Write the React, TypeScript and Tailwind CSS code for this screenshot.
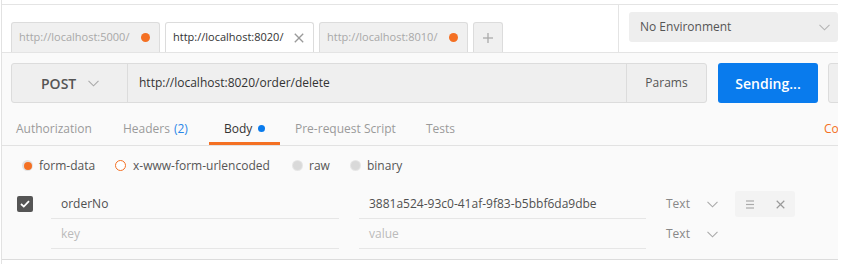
import React from "react";

const Chevron = ({ className = "" }: { className?: string }) => (
  <svg width="11" height="7" viewBox="0 0 11 7" className={className}>
    <polyline points="0.5,0.8 5.5,5.8 10.5,0.8" fill="none" stroke="currentColor" strokeWidth="1.1" />
  </svg>
);

const XIcon = ({ size = 10, className = "" }: { size?: number; className?: string }) => (
  <svg width={size} height={size} viewBox="0 0 10 10" className={className}>
    <line x1="0.8" y1="0.8" x2="9.2" y2="9.2" stroke="currentColor" strokeWidth="1.3" />
    <line x1="9.2" y1="0.8" x2="0.8" y2="9.2" stroke="currentColor" strokeWidth="1.3" />
  </svg>
);

const font = { fontFamily: '"Open Sans", "Liberation Sans", sans-serif' };

function Tab({ label, active, dot }: { label: string; active?: boolean; dot?: boolean }) {
  return (
    <div
      className={
        "h-[30px] w-[149px] shrink-0 rounded-t-[3px] border border-b-0 border-[#dcdcdc] flex items-center justify-between pl-[7px] pr-[9px] text-[11px] " +
        (active ? "bg-white text-[#333]" : "bg-[#f0f0f0] text-[#a8a8a8]")
      }
    >
      <span>{label}</span>
      {dot ? (
        <span className="w-[9px] h-[9px] rounded-full bg-[#f47023]" />
      ) : (
        <XIcon size={10} className="text-[#9a9a9a]" />
      )}
    </div>
  );
}

function Radio({ kind }: { kind: "on" | "hover" | "off" }) {
  if (kind === "on")
    return (
      <span className="w-[11px] h-[11px] rounded-full bg-[#e2e2e2] flex items-center justify-center">
        <span className="w-[8px] h-[8px] rounded-full bg-[#f47023]" />
      </span>
    );
  if (kind === "hover")
    return <span className="w-[11px] h-[11px] rounded-full bg-white border border-[#f47023]" />;
  return (
    <span className="w-[11px] h-[11px] rounded-full bg-[#e6e6e6] flex items-center justify-center">
      <span className="w-[9px] h-[9px] rounded-full bg-[#d9d9d9]" />
    </span>
  );
}

export default function App() {
  return (
    <div className="w-[842px] h-[264px] overflow-hidden bg-white" style={font}>
      <div className="ml-px w-[837px] h-full overflow-hidden border-l border-[#e2e2e2] flex flex-col bg-[#fafafa]">
        {/* header */}
        <div className="bg-white pt-[4px] shrink-0">
          <div className="h-[49px] border-t border-b border-[#e4e4e4] flex">
            <div className="w-[617px] shrink-0 border-r border-[#e4e4e4] flex items-end gap-[5px] pl-[9px]">
              <Tab label="http://localhost:5000/" dot />
              <Tab label="http://localhost:8020/" active />
              <Tab label="http://localhost:8010/" dot />
              <div className="h-[30px] w-[30px] shrink-0 rounded-t-[3px] border border-b-0 border-[#dcdcdc] bg-[#f0f0f0] flex items-center justify-center text-[#aaa]">
                <svg width="10" height="10" viewBox="0 0 10 10">
                  <line x1="5" y1="0" x2="5" y2="10" stroke="currentColor" strokeWidth="1.3" />
                  <line x1="0" y1="5" x2="10" y2="5" stroke="currentColor" strokeWidth="1.3" />
                </svg>
              </div>
            </div>
            <div className="pl-[10px] pt-[7px]">
              <div className="w-[209px] h-[30px] rounded-[3px] bg-[#eeeeee] flex items-center justify-between pl-[11px] pr-[8px] text-[12px] text-[#555]">
                <span>No Environment</span>
                <Chevron className="text-[#b5b5b5]" />
              </div>
            </div>
          </div>
        </div>

        {/* url row */}
        <div className="flex pt-[10px] pl-[9px] shrink-0">
          <div className="w-[696px] h-[40px] shrink-0 rounded-[3px] border border-[#dcdcdc] bg-[#efefef] flex">
            <div className="w-[116px] border-r border-[#dcdcdc] flex items-center pl-[29px] text-[#555]">
              <span className="text-[14px] font-semibold">POST</span>
              <Chevron className="ml-[12px] text-[#aaa]" />
            </div>
            <div className="flex-1 flex items-center pl-[11px] text-[12px] text-[#333]">
              http://localhost:8020/order/delete
            </div>
            <div className="w-[80px] border-l border-[#dcdcdc] flex items-center justify-center text-[12px] text-[#555]">
              Params
            </div>
          </div>
          <div className="ml-[11px] w-[100px] h-[40px] shrink-0 rounded-[3px] bg-[#097bed] text-white text-[14px] font-semibold flex items-center justify-center">
            Sending...
          </div>
          <div className="ml-[10px] w-[80px] h-[40px] shrink-0 rounded-[3px] border border-[#dcdcdc] bg-[#efefef] text-[14px] text-[#555] flex items-center pl-[9px]">
            Save
          </div>
        </div>

        {/* sub tabs */}
        <div className="h-[43px] border-b border-[#e2e2e2] flex text-[12px] text-[#9a9a9a] shrink-0">
          <div className="w-[106px] pl-[14px] pt-[12px] border-b-[3px] border-transparent flex items-center">Authorization</div>
          <div className="w-[101px] pl-[15px] pt-[12px] border-b-[3px] border-transparent flex items-center">
            Headers <span className="ml-[4px] text-[#2a87e8]">(2)</span>
          </div>
          <div className="w-[71px] pl-[15px] pt-[12px] border-b-[3px] border-[#f47023] flex items-center text-[#333]">
            Body
            <span className="ml-[6px] w-[7px] h-[7px] rounded-full bg-[#097bed]" />
          </div>
          <div className="w-[131px] pl-[15px] pt-[12px] border-b-[3px] border-transparent flex items-center">Pre-request Script</div>
          <div className="pl-[15px] pt-[12px] border-b-[3px] border-transparent flex items-center">Tests</div>
          <div className="ml-auto w-[14px] overflow-hidden whitespace-nowrap pt-[12px] border-b-[3px] border-transparent flex items-center text-[#f47023]">
            Cookies
          </div>
        </div>

        {/* radio row */}
        <div className="h-[38px] flex items-center pl-[20px] pt-[1px] text-[12px] text-[#555] shrink-0">
          <div className="w-[93px] flex items-center gap-[6px]">
            <Radio kind="on" />
            <span>form-data</span>
          </div>
          <div className="w-[177px] flex items-center gap-[7px]">
            <Radio kind="hover" />
            <span>x-www-form-urlencoded</span>
          </div>
          <div className="w-[58px] flex items-center gap-[6px]">
            <Radio kind="off" />
            <span>raw</span>
          </div>
          <div className="flex items-center gap-[6px]">
            <Radio kind="off" />
            <span>binary</span>
          </div>
        </div>

        {/* key value rows */}
        <div className="mt-[5px] pb-[10px] border-b border-[#dcdcdc] text-[12px] shrink-0">
          <div className="h-[30px] flex items-center">
            <div className="w-[49px] pl-[15px] flex items-center">
              <span className="w-[16px] h-[16px] rounded-[2px] bg-[#555] flex items-center justify-center">
                <svg width="10" height="8" viewBox="0 0 10 8">
                  <polyline points="1,4 3.8,6.6 9,1.2" fill="none" stroke="white" strokeWidth="1.8" />
                </svg>
              </span>
            </div>
            <div className="w-[288px] h-full border-b border-[#e6e6e6] flex items-center pl-[10px] text-[#505050]">orderNo</div>
            <div className="ml-[20px] w-[287px] h-full border-b border-[#e6e6e6] flex items-center pl-[10px] text-[#505050]">
              3881a524-93c0-41af-9f83-b5bbf6da9dbe
            </div>
            <div className="ml-[20px] w-[69px] flex items-center text-[#888]">
              <span className="w-[41px]">Text</span>
              <Chevron className="text-[#aaa]" />
            </div>
            <div className="w-[60px] h-[26px] rounded-[3px] bg-[#f3f3f3] flex items-center text-[#aaa]">
              <svg width="8" height="9" viewBox="0 0 8 9" className="ml-[11px]">
                <line x1="0" y1="1" x2="8" y2="1" stroke="currentColor" strokeWidth="1.2" />
                <line x1="0" y1="4.5" x2="8" y2="4.5" stroke="currentColor" strokeWidth="1.2" />
                <line x1="0" y1="8" x2="8" y2="8" stroke="currentColor" strokeWidth="1.2" />
              </svg>
              <XIcon size={9} className="ml-[22px] text-[#9a9a9a]" />
            </div>
          </div>
          <div className="h-[30px] flex items-center">
            <div className="w-[49px]" />
            <div className="w-[288px] h-full border-b border-[#e6e6e6] flex items-center pl-[10px] text-[#bbb]">key</div>
            <div className="ml-[20px] w-[287px] h-full border-b border-[#e6e6e6] flex items-center pl-[10px] text-[#bbb]">value</div>
            <div className="ml-[20px] w-[69px] flex items-center text-[#888]">
              <span className="w-[41px]">Text</span>
              <Chevron className="text-[#aaa]" />
            </div>
          </div>
        </div>
        <div className="flex-1 bg-white" />
      </div>
    </div>
  );
}
